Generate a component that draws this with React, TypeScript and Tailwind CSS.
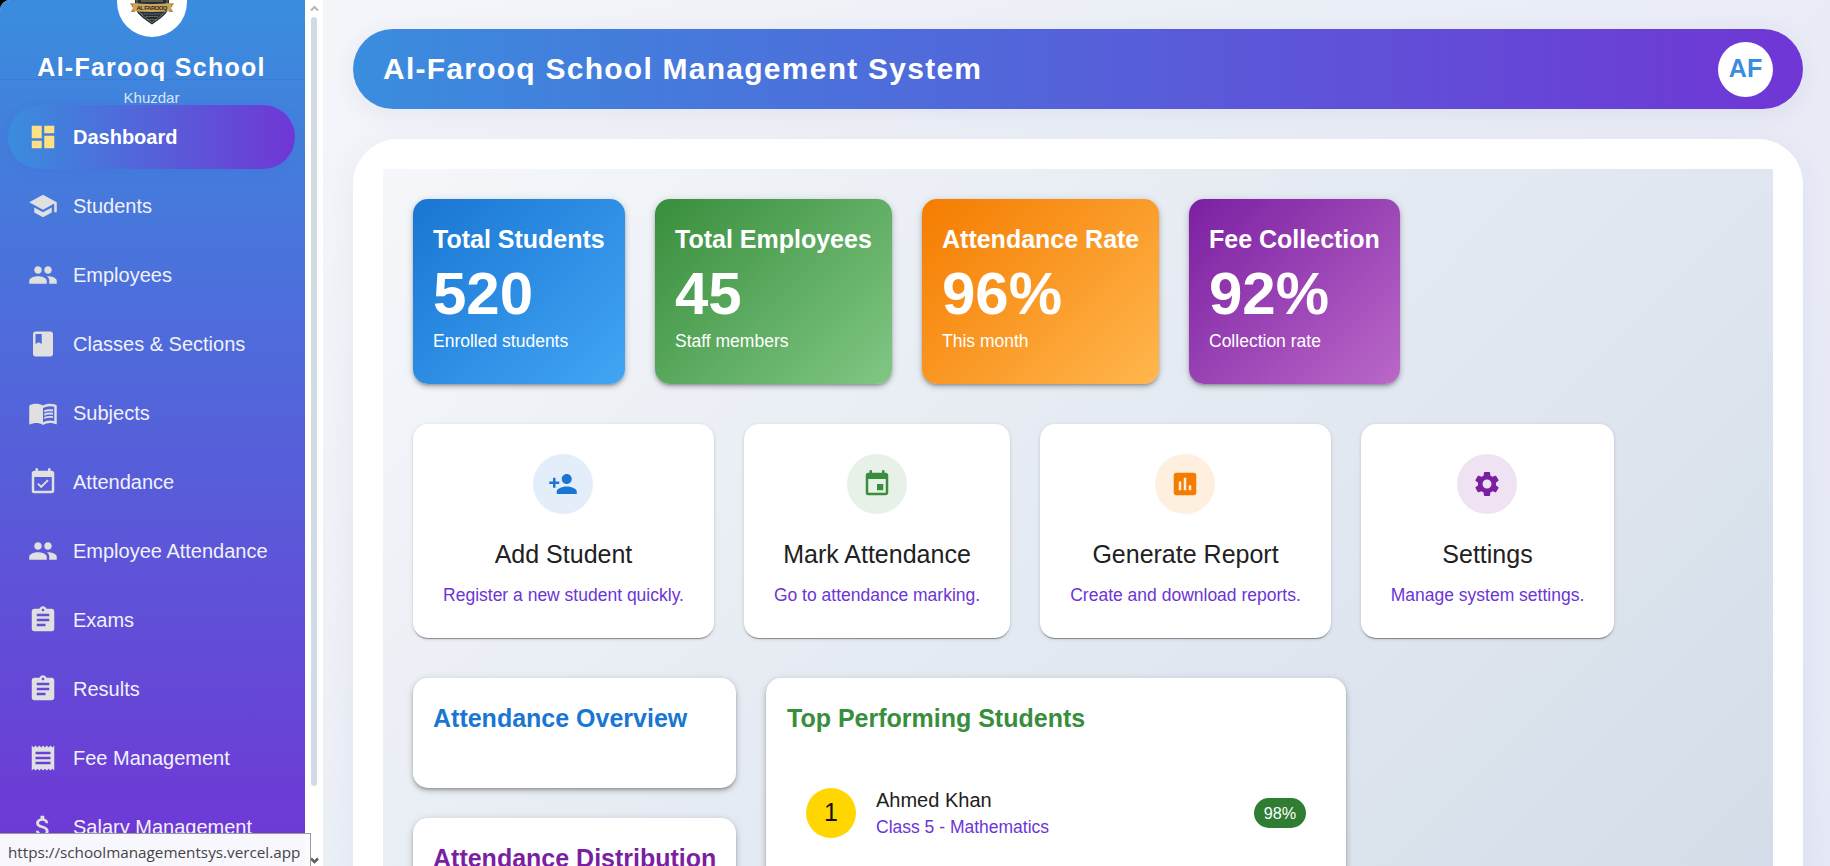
import type { ComponentType } from "react";
import {
  MdAssessment, MdAssignment, MdAttachMoney, MdClass, MdDashboard, MdEvent, MdEventAvailable,
  MdMenuBook, MdPeople, MdReceipt, MdSchool, MdSettings,
} from "react-icons/md";

type Icon = ComponentType<{ className?: string }>;

function PersonAdd({ className }: { className?: string }) {
  return (
    <svg viewBox="0 0 24 24" fill="currentColor" className={className}>
      <path d="M15 12c2.21 0 4-1.79 4-4s-1.79-4-4-4-4 1.79-4 4 1.79 4 4 4m-9-2V7H4v3H1v2h3v3h2v-3h3v-2zm9 4c-2.67 0-8 1.34-8 4v2h16v-2c0-2.66-5.33-4-8-4" />
    </svg>
  );
}

const nav: { label: string; icon: Icon; active?: boolean }[] = [
  { label: "Dashboard", icon: MdDashboard, active: true },
  { label: "Students", icon: MdSchool },
  { label: "Employees", icon: MdPeople },
  { label: "Classes & Sections", icon: MdClass },
  { label: "Subjects", icon: MdMenuBook },
  { label: "Attendance", icon: MdEventAvailable },
  { label: "Employee Attendance", icon: MdPeople },
  { label: "Exams", icon: MdAssignment },
  { label: "Results", icon: MdAssignment },
  { label: "Fee Management", icon: MdReceipt },
  { label: "Salary Management", icon: MdAttachMoney },
];

const stats = [
  { title: "Total Students", value: "520", note: "Enrolled students", style: "w-[212px] from-[#1976d2] to-[#42a5f5]" },
  { title: "Total Employees", value: "45", note: "Staff members", style: "w-[237px] from-[#388e3c] to-[#81c784]" },
  { title: "Attendance Rate", value: "96%", note: "This month", style: "w-[237px] from-[#f57c00] to-[#ffb74d]" },
  { title: "Fee Collection", value: "92%", note: "Collection rate", style: "w-[211px] from-[#7b1fa2] to-[#ba68c8]" },
];

const actions: { title: string; note: string; icon: Icon; width: string; color: string }[] = [
  { title: "Add Student", note: "Register a new student quickly.", icon: PersonAdd, width: "w-[301px]", color: "bg-[#e3eefa] text-[#1976d2]" },
  { title: "Mark Attendance", note: "Go to attendance marking.", icon: MdEvent, width: "w-[266px]", color: "bg-[#e7f1e7] text-[#388e3c]" },
  { title: "Generate Report", note: "Create and download reports.", icon: MdAssessment, width: "w-[291px]", color: "bg-[#feefdf] text-[#f57c00]" },
  { title: "Settings", note: "Manage system settings.", icon: MdSettings, width: "w-[253px]", color: "bg-[#efe3f3] text-[#7b1fa2]" },
];

const raised = "shadow-[0_2px_3px_-1px_rgba(0,0,0,0.25),0_3px_5px_rgba(0,0,0,0.16),0_1px_9px_rgba(0,0,0,0.12)]";
const flat = "shadow-[0_2px_1px_-1px_rgba(0,0,0,0.25),0_1px_1px_rgba(0,0,0,0.16),0_1px_4px_rgba(0,0,0,0.12)]";

function Crest() {
  return (
    <svg viewBox="0 0 44 44" className="h-11 w-11">
      <path d="M5 8L22 1l17 7v17c-1 8-8 12-17 18.500C13 37 6 33 5 25z" fill="#1d2c3e" />
      <path d="M7 10L22 4l15 6v15c-1 7-7 11-15 16.500C14 36 8 32 7 25z" fill="none" stroke="#a98a4b" strokeWidth=".8" />
      <path d="M10 17.500h24M11 20h22" stroke="#a98a4b" strokeWidth="1" />
      <path d="M0 22l5 1v8H1l2-4zM44 22l-5 1v8h4l-2-4z" fill="#a98340" />
      <path d="M3 22q19 2 38 0v8q-19 2-38 0z" fill="#cda557" />
      <text x="22" y="28.800" textAnchor="middle" fontSize="6" fontWeight="700" fill="#2b2a26" textLength="31">AL FAROOQ</text>
      <path d="M11 33h22M16 35.500h12M17 38.500h10" stroke="#8d8468" strokeWidth=".8" strokeDasharray="2 .6" />
    </svg>
  );
}

function Sidebar() {
  return (
    <aside className="relative flex h-full w-[305px] shrink-0 flex-col overflow-hidden rounded-tl-[10px] bg-linear-to-b/srgb from-[#3a8dde] to-[#7036d5]">
      <div className="flex h-[105px] shrink-0 flex-col items-center overflow-hidden pr-[2px]">
        <div className="-mt-[33px] flex h-[70px] w-[70px] shrink-0 items-end justify-center rounded-full bg-white pb-3">
          <Crest />
        </div>
        <div className="mt-[10px] text-[25px] leading-10 font-bold tracking-[1.25px] text-white">Al-Farooq School</div>
        <div className="text-[15px] leading-[22px] text-[#dfe4f2]">Khuzdar</div>
      </div>
      <div className="absolute top-[79px] left-0 h-px w-full bg-black/5" />
      <nav className="relative flex flex-col gap-[5px] pr-[10px] pl-2">
        {nav.map(({ label, icon: I, active }) => (
          <div
            key={label}
            className={
              active
                ? "flex h-16 shrink-0 items-center rounded-[32px] bg-linear-to-r/srgb from-[#3a8dde] to-[#7036d5] pl-5 text-[20px] font-bold text-white shadow-[0_2px_10px_rgba(58,100,222,0.2)]"
                : "flex h-16 shrink-0 items-center rounded-[32px] pl-5 text-[20px] text-[#f1f1fa]"
            }
          >
            <I className={active ? "h-[30px] w-[30px] text-[#ffe082]" : "h-[30px] w-[30px] text-[#e0e0e0]"} />
            <span className="ml-[15px] whitespace-nowrap">{label}</span>
          </div>
        ))}
      </nav>
    </aside>
  );
}

function ScrollTrack() {
  return (
    <div className="flex h-full w-[18px] shrink-0 flex-col items-center bg-white">
      <svg viewBox="0 0 18 17" className="h-[17px] w-[18px]" fill="none" stroke="#b5b5b5" strokeWidth="2">
        <path d="M6 10.500l3.500-3.500 3.500 3.500" />
      </svg>
      <div className="h-[769px] w-[6px] rounded-full bg-[#d0dbe4]" />
      <svg viewBox="0 0 18 20" className="mt-auto h-5 w-[18px]" fill="none" stroke="#5f5f5f" strokeWidth="2.500">
        <path d="M6 12.500l3.500 3.500 3.500-3.500" />
      </svg>
    </div>
  );
}

export default function App() {
  return (
    <div className="relative h-[866px] w-[1830px] overflow-hidden bg-black font-['Liberation_Sans',Arial,sans-serif]">
      <div className="flex h-full rounded-tl-[10px] bg-linear-[135deg,#f7f8fb_0%,#f3f4f9_20%,#ebeff6_44%,#e9ecf6_68%,#e5e8f6_100%]">
        <Sidebar />
        <ScrollTrack />
        <main className="flex h-full w-[1507px] shrink-0 flex-col gap-[30px] pt-[29px] pr-[27px] pl-[30px]">
          <header className="flex h-20 shrink-0 items-center justify-between rounded-[40px] bg-linear-to-r/srgb from-[#3a8dde] to-[#7036d5] pr-[30px] pl-[30px] shadow-[0_5px_25px_rgba(60,60,130,0.08)]">
            <h1 className="pb-[2px] text-[30px] font-bold tracking-[1.25px] text-white">Al-Farooq School Management System</h1>
            <div className="flex h-[55px] w-[55px] items-center justify-center rounded-full bg-white text-[25px] font-bold text-[#3a8dde]">AF</div>
          </header>
          <section className="h-[1500px] shrink-0 rounded-[45px] bg-white p-[30px] shadow-[0_5px_30px_rgba(60,60,130,0.06)]">
            <div className="flex h-full flex-col bg-linear-[135deg,#f5f7fa_0%,#e8edf4_28%,#dfe6ef_50%,#d3dce8_75%,#c6d1e3_100%] p-[30px]">
              <div className="flex gap-[30px]">
                {stats.map((s) => (
                  <div key={s.title} className={`${s.style} ${raised} h-[185px] rounded-[15px] bg-linear-135/srgb pt-5 pl-5 text-white`}>
                    <div className="text-[25px] leading-10 font-bold whitespace-nowrap">{s.title}</div>
                    <div className="mt-px text-[60px] leading-[67px] font-bold">{s.value}</div>
                    <div className="mt-px text-[17.500px] leading-[26px]">{s.note}</div>
                  </div>
                ))}
              </div>
              <div className="mt-10 flex gap-[30px]">
                {actions.map(({ title, note, icon: I, width, color }) => (
                  <div key={title} className={`${width} ${flat} flex h-[214px] flex-col items-center rounded-[15px] bg-white pt-[30px]`}>
                    <div className={`${color} mr-px flex h-[60px] w-[60px] items-center justify-center rounded-full`}>
                      <I className="h-[30px] w-[30px]" />
                    </div>
                    <div className="mt-5 text-[25px] leading-10 text-[#212121]">{title}</div>
                    <div className="mt-2 text-[17.500px] leading-[26px] whitespace-nowrap text-[#6c35d5]">{note}</div>
                  </div>
                ))}
              </div>
              <div className="mt-10 flex gap-[30px]">
                <div className="flex w-[323px] flex-col gap-[30px]">
                  <div className={`${raised} h-[110px] rounded-[15px] bg-white pt-5 pl-5 text-[25px] leading-10 font-bold text-[#1976d2]`}>Attendance Overview</div>
                  <div className={`${raised} h-[300px] rounded-[15px] bg-white pt-5 pl-5 text-[25px] leading-10 font-bold text-[#7b1fa2]`}>Attendance Distribution</div>
                </div>
                <div className={`${raised} h-[440px] w-[580px] rounded-[15px] bg-white px-5 pt-5`}>
                  <div className="pl-px text-[25px] leading-10 font-bold text-[#388e3c]">Top Performing Students</div>
                  <div className="mt-[50px] flex h-[50px] items-center px-5">
                    <div className="flex h-[50px] w-[50px] items-center justify-center rounded-full bg-[#ffd600] text-[25px] text-[#111]">1</div>
                    <div className="ml-5 flex-1 pb-[2px]">
                      <div className="text-[20px] leading-[30px] text-[#212121]">Ahmed Khan</div>
                      <div className="text-[17.500px] leading-[25px] text-[#6c35d5]">Class 5 - Mathematics</div>
                    </div>
                    <div className="flex h-[30px] w-[52px] items-center justify-center rounded-[15px] bg-[#2e7d32] text-[16.250px] text-white">98%</div>
                  </div>
                </div>
              </div>
            </div>
          </section>
        </main>
      </div>
      <div className="absolute bottom-0 left-0 flex h-[33px] w-[311px] items-center border-t border-r border-[#9a9a9a] bg-[#fbfbfe]/98 pt-1 pl-2 font-['Open_Sans','Noto_Sans',sans-serif] text-[15.250px] text-[#444]">
        https://schoolmanagementsys.vercel.app
      </div>
    </div>
  );
}
